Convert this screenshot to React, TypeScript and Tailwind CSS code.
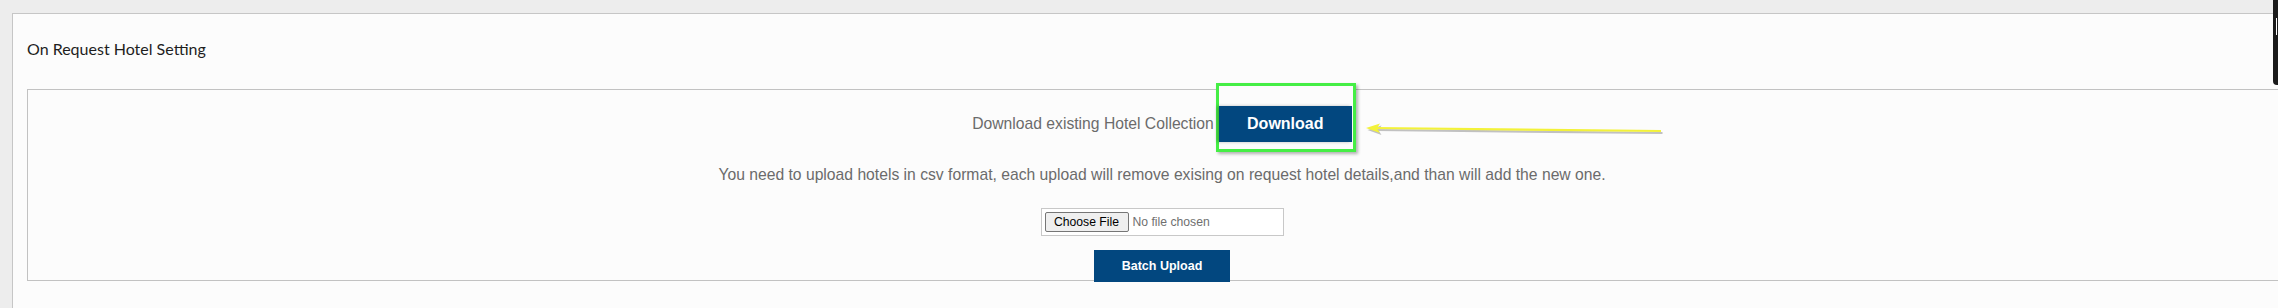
import React from "react";

export default function App() {
  return (
    <div className="relative w-[2278px] h-[308px] overflow-hidden bg-[#ededed] pt-[13px] pl-[12px]">
      <div className="w-[2300px] h-[320px] border border-[#c6c6c6] bg-[#fcfcfc] px-[14px] pt-[25px]">
        <div className="text-[16px] leading-[20px] text-[#1e1e1e] font-['Lato',sans-serif]">
          On Request Hotel Setting
        </div>
        <div className="mt-[30px] w-[2270px] border border-[#c2c2c2] pt-[16px] flex flex-col items-center font-['Liberation_Sans',Arial,sans-serif]">
          <div className="flex items-center gap-[4px] h-[36px]">
            <span className="text-[15.7px] leading-[20px] text-[#6b6b6b]">Download existing Hotel Collection</span>
            <div className="relative ml-[1px]">
              <div className="absolute left-[-3px] top-[-23px] right-[-4px] bottom-[-10px] border-[3px] border-[#45ee45] bg-[#fcfcfc] shadow-[2px_2px_3px_rgba(0,0,0,0.3)]" />
              <button className="relative w-[133px] h-[36px] bg-[#02477f] text-white font-bold text-[16px] leading-[20px] shadow-[-2px_0_3px_rgba(0,0,0,0.25)]">
                Download
              </button>
              <svg
                className="absolute left-[calc(100%+13px)] top-[15px]"
                width="300"
                height="16"
                viewBox="0 0 300 16"
              >
                <g opacity="0.35" transform="translate(1.5,2)">
                  <line x1="10" y1="7" x2="296" y2="10" stroke="#555" strokeWidth="2.2" />
                  <polygon points="1,7 15,2.5 12,7.3 15,12" fill="#555" />
                </g>
                <line x1="10" y1="7" x2="296" y2="10" stroke="#f3f23a" strokeWidth="2.2" />
                <polygon points="1,7 15,2.5 12,7.3 15,12" fill="#f3f23a" />
              </svg>
            </div>
          </div>
          <div className="mt-[23px] text-[15.7px] leading-[20px] text-[#6b6b6b]">
            You need to upload hotels in csv format, each upload will remove exising on request hotel details,and than will add the new one.
          </div>
          <div className="mt-[23px] w-[243px] h-[28px] border border-[#c8c8c8] bg-white flex items-center pl-[3px]">
            <div className="w-[84px] h-[20px] border border-[#767676] bg-[#efefef] rounded-[2px] flex items-center justify-center text-[12.2px] leading-[16px] text-black">
              Choose File
            </div>
            <span className="ml-[4px] text-[12.2px] leading-[16px] text-[#6f6f6f]">No file chosen</span>
          </div>
          <button className="mt-[14px] mb-[-2px] w-[136px] h-[32px] bg-[#02477f] text-white font-bold text-[12.5px] leading-[16px]">
            Batch Upload
          </button>
        </div>
      </div>
      <div className="absolute top-0 right-0 w-[5px] h-[85px] bg-[#1b1b1b] rounded-bl-[4px]">
        <div className="absolute left-[3px] top-[18px] w-[1px] h-[17px] bg-white" />
      </div>
    </div>
  );
}
